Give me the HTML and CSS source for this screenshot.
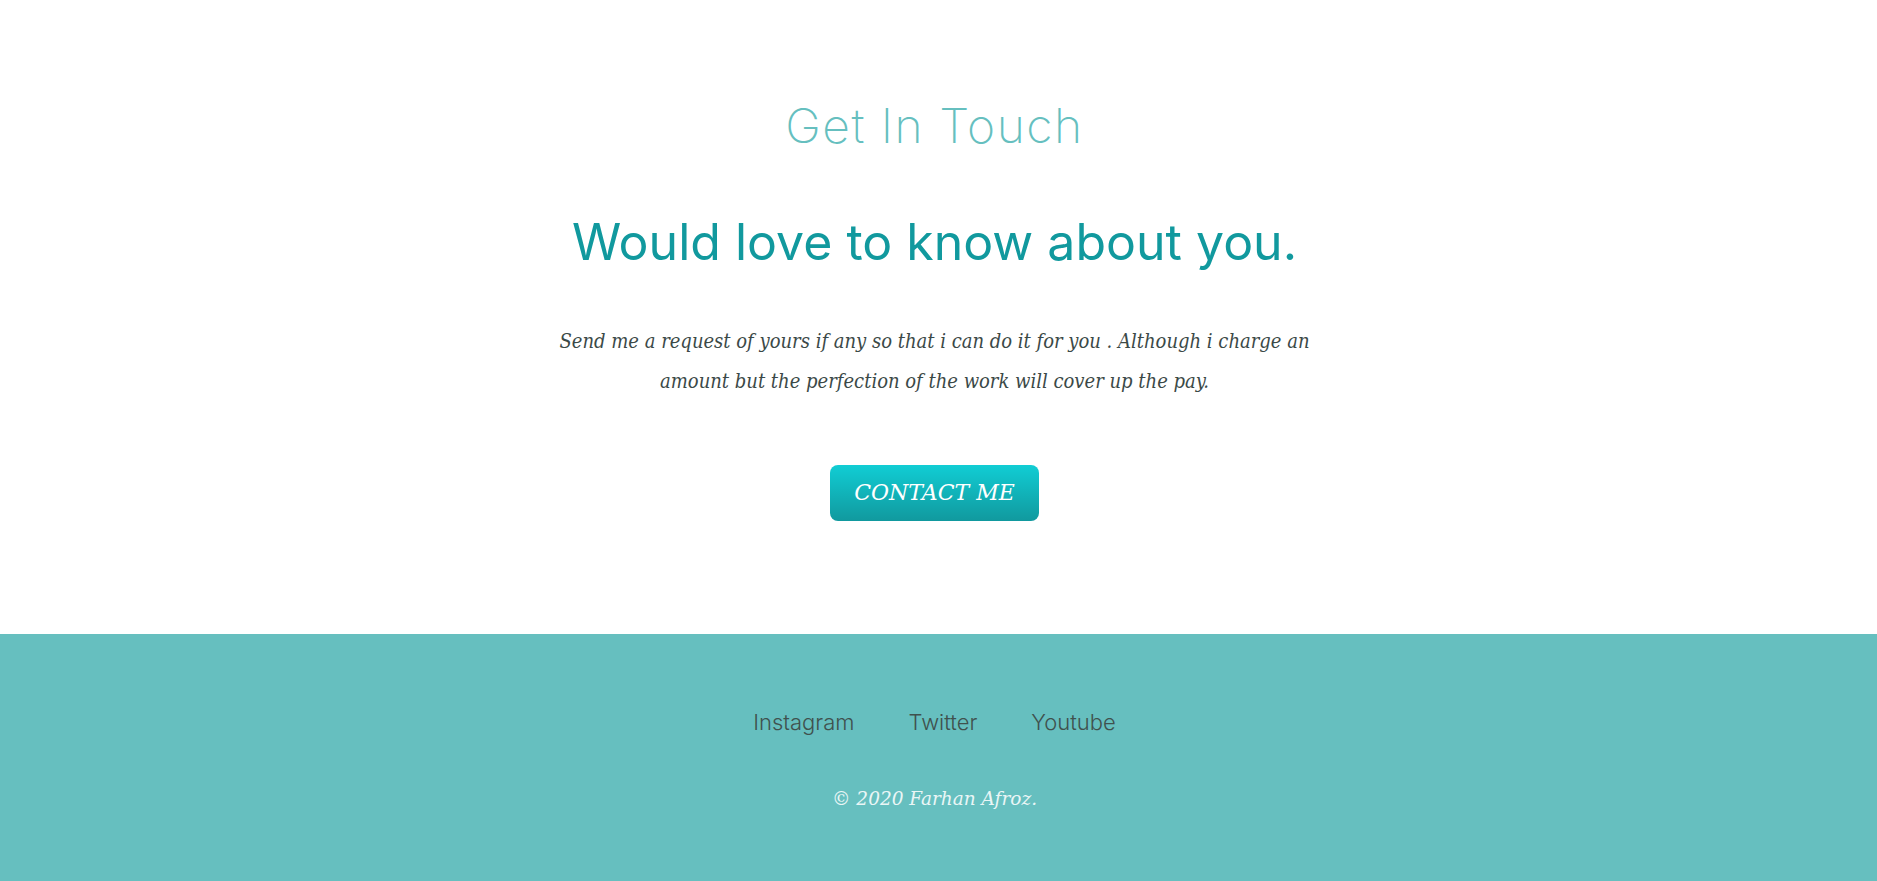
FILE: index.html
```html
<!DOCTYPE html>
<html lang="en">
<head>
<meta charset="utf-8">
<title>Get In Touch</title>
<link rel="stylesheet" href="styles.css">
</head>
<body>
<section class="contact">
  <h2 class="contact-title">Get In Touch</h2>
  <h3 class="contact-subtitle">Would love to know about you.</h3>
  <p class="contact-message">Send me a request of yours if any so that i can do it for you . Although i charge an amount but the perfection of the work will cover up the pay.</p>
  <a class="btn" href="#">CONTACT ME</a>
</section>
<footer class="bottom-container">
  <nav class="footer-links">
    <a class="footer-link" href="#">Instagram</a>
    <a class="footer-link" href="#">Twitter</a>
    <a class="footer-link" href="#">Youtube</a>
  </nav>
  <p class="copyright">© 2020 Farhan Afroz.</p>
</footer>
</body>
</html>
```

FILE: styles.css
```css
body {
  margin: 0;
  text-align: center;
  font-family: "DejaVu Serif", "Liberation Serif", serif;
  background: #ffffff;
}

.contact {
  padding: 97px 8px 113px 0;
}

.contact-title {
  margin: 0;
  font-family: "Inter", "Liberation Sans", sans-serif;
  font-weight: 200;
  font-size: 48px;
  letter-spacing: 1.5px;
  line-height: 58px;
  color: #66BFBF;
}

.contact-subtitle {
  margin: 56px 0 0;
  font-family: "Inter", "Liberation Sans", sans-serif;
  font-weight: 400;
  font-size: 50px;
  line-height: 62px;
  color: #11999E;
}

.contact-message {
  width: 751px;
  margin: 48px auto 64px;
  font-family: "DejaVu Serif Condensed", "DejaVu Serif", serif;
  font-stretch: condensed;
  font-style: italic;
  font-size: 20px;
  line-height: 40px;
  color: #3b4947;
}

.btn {
  display: inline-block;
  height: 56px;
  box-sizing: border-box;
  padding: 0 24px;
  line-height: 56px;
  border-radius: 8px;
  background: linear-gradient(to bottom, #11cdd4, #11999e);
  color: #ffffff;
  font-style: italic;
  font-size: 22px;
  text-decoration: none;
}

.bottom-container {
  background-color: #66BFBF;
  padding: 74px 8px 90px 0;
}

.footer-links {
  display: flex;
  justify-content: center;
  gap: 54px;
}

.footer-link {
  font-family: "Inter", "Liberation Sans", sans-serif;
  font-weight: 300;
  font-size: 22px;
  line-height: 28px;
  color: #40514E;
  text-decoration: none;
}

.copyright {
  margin: 51px 0 0;
  font-style: italic;
  font-size: 18.5px;
  line-height: 24px;
  color: #EAF6F6;
}
```
